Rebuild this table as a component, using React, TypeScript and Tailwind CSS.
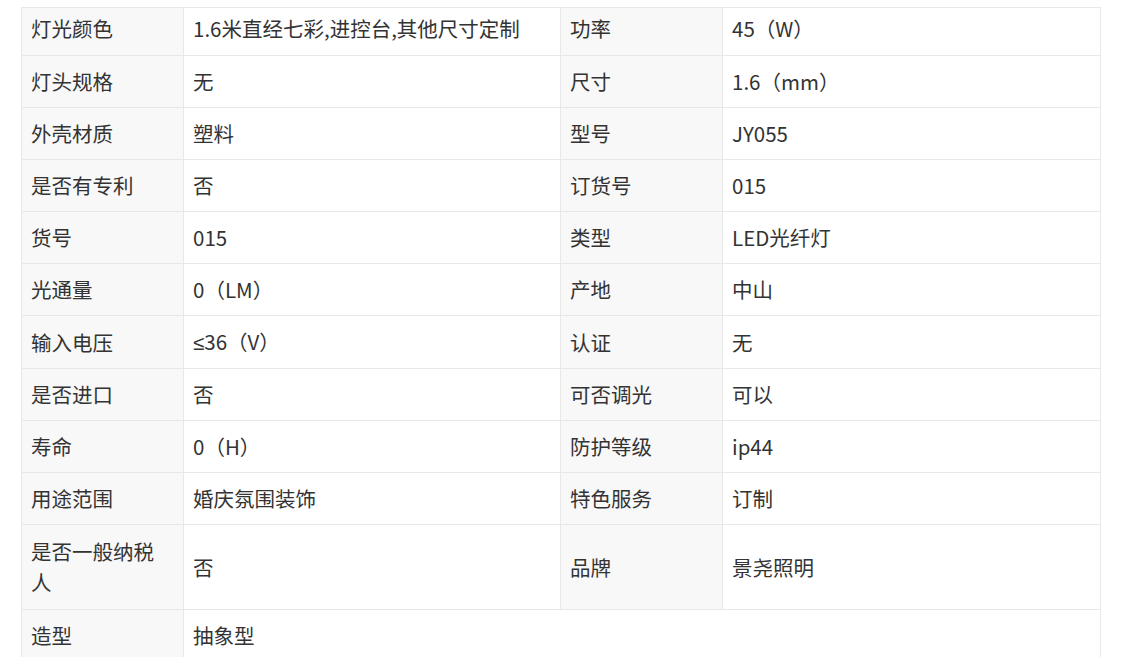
import type { ReactNode } from 'react';

const rows: [string, ReactNode, string, string][] = [
  ['灯光颜色', '1.6米直经七彩,进控台,其他尺寸定制', '功率', '45（W）'],
  ['灯头规格', '无', '尺寸', '1.6（mm）'],
  ['外壳材质', '塑料', '型号', 'JY055'],
  ['是否有专利', '否', '订货号', '015'],
  ['货号', '015', '类型', 'LED光纤灯'],
  ['光通量', '0（LM）', '产地', '中山'],
  ['输入电压', <><span style={{ fontFamily: '"Liberation Sans", sans-serif' }}>≤</span>36（V）</>, '认证', '无'],
  ['是否进口', '否', '可否调光', '可以'],
  ['寿命', '0（H）', '防护等级', 'ip44'],
  ['用途范围', '婚庆氛围装饰', '特色服务', '订制'],
  ['是否一般纳税人', '否', '品牌', '景尧照明'],
];

export default function App() {
  const label = 'border border-[#e8e8e8] bg-[#f8f8f8] pl-[9px] pr-[10px] align-middle';
  const value = 'border border-[#e8e8e8] bg-white pl-[9px] pr-[10px] align-middle';

  return (
    <div
      className="min-h-[657px] bg-white pl-[21px] pt-[7px] text-[20.5px] leading-[31px] text-[#333]"
      style={{ fontFamily: '"Noto Sans CJK SC", "Noto Sans", sans-serif' }}
    >
      <table className="w-[1079px] table-fixed border-collapse">
        <colgroup>
          <col className="w-[162px]" />
          <col className="w-[377px]" />
          <col className="w-[162px]" />
          <col className="w-[378px]" />
        </colgroup>
        <tbody>
          {rows.map((r, i) => {
            const py =
              i === 0 ? 'pt-[5px] pb-[11px]' : i === rows.length - 1 ? 'py-[11px]' : 'py-[10px]';
            return (
              <tr key={i}>
                <td className={`${label} ${py}`}>{r[0]}</td>
                <td className={`${value} ${py}`}>{r[1]}</td>
                <td className={`${label} ${py}`}>{r[2]}</td>
                <td className={`${value} ${py}`}>{r[3]}</td>
              </tr>
            );
          })}
          <tr>
            <td className={`${label} py-[10px]`}>造型</td>
            <td colSpan={3} className={`${value} py-[10px]`}>抽象型</td>
          </tr>
        </tbody>
      </table>
    </div>
  );
}
